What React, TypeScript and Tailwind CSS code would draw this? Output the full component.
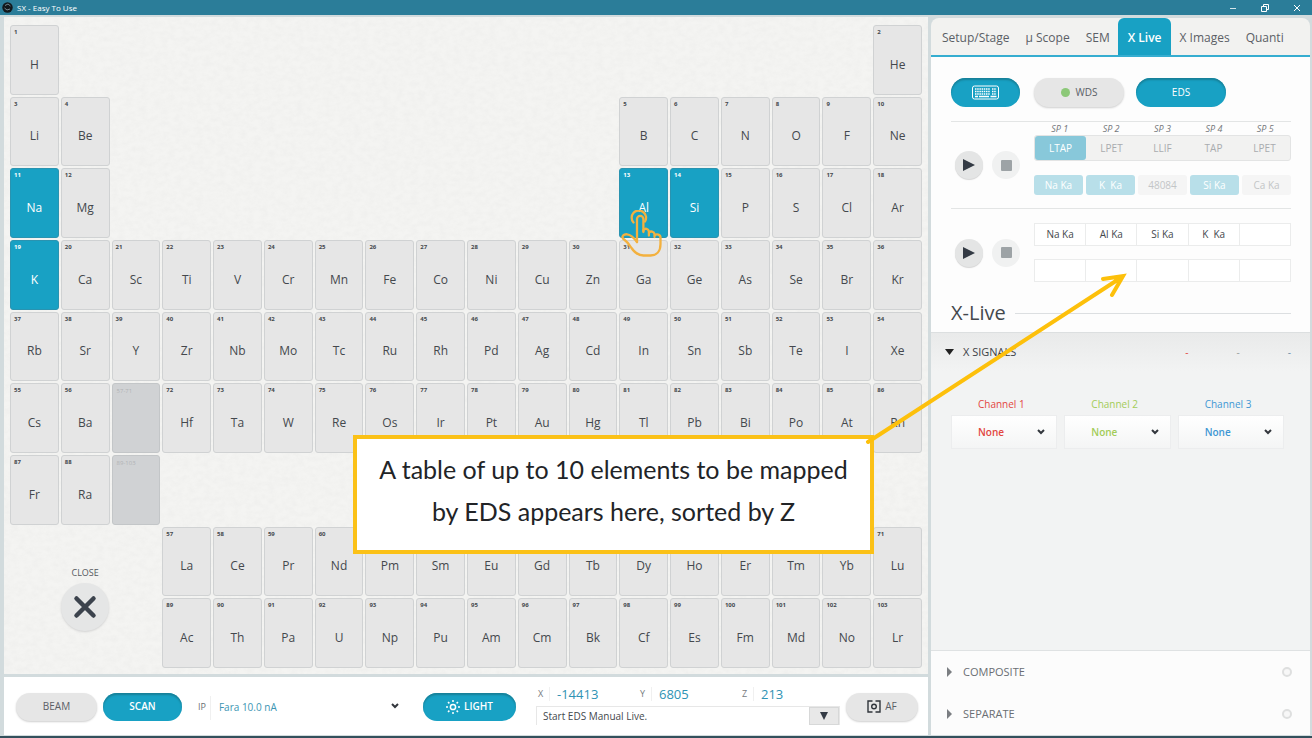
import { useState } from 'react';

const ELEMENTS = (
  'H He Li Be B C N O F Ne Na Mg Al Si P S Cl Ar K Ca Sc Ti V Cr Mn Fe Co Ni Cu Zn Ga Ge As Se Br Kr ' +
  'Rb Sr Y Zr Nb Mo Tc Ru Rh Pd Ag Cd In Sn Sb Te I Xe Cs Ba La Ce Pr Nd Pm Sm Eu Gd Tb Dy Ho Er Tm Yb Lu ' +
  'Hf Ta W Re Os Ir Pt Au Hg Tl Pb Bi Po At Rn Fr Ra Ac Th Pa U Np Pu Am Cm Bk Cf Es Fm Md No Lr'
).split(' ');

// "." is an empty place, "a-b" a block that stands for a series
const ROWS = [
  'H . . . . . . . . . . . . . . . . He',
  'Li Be . . . . . . . . . . B C N O F Ne',
  'Na Mg . . . . . . . . . . Al Si P S Cl Ar',
  'K Ca Sc Ti V Cr Mn Fe Co Ni Cu Zn Ga Ge As Se Br Kr',
  'Rb Sr Y Zr Nb Mo Tc Ru Rh Pd Ag Cd In Sn Sb Te I Xe',
  'Cs Ba 57-71 Hf Ta W Re Os Ir Pt Au Hg Tl Pb Bi Po At Rn',
  'Fr Ra 89-103 . . . . . . . . . . . . . . .',
];
const LANTHANIDES = ELEMENTS.slice(56, 71);
const ACTINIDES = ELEMENTS.slice(88, 103);

const TABS = ['Setup/Stage', 'µ Scope', 'SEM', 'X Live', 'X Images', 'Quanti'];
const SPECTROMETERS = [
  { sp: 'SP 1', crystal: 'LTAP', line: 'Na Ka', on: true },
  { sp: 'SP 2', crystal: 'LPET', line: 'K  Ka', on: true },
  { sp: 'SP 3', crystal: 'LLIF', line: '48084', on: false },
  { sp: 'SP 4', crystal: 'TAP', line: 'Si Ka', on: true },
  { sp: 'SP 5', crystal: 'LPET', line: 'Ca Ka', on: false },
];
const EDS_LINES = ['Na Ka', 'Al Ka', 'Si Ka', 'K  Ka', ''];
const CHANNELS = [
  { name: 'Channel 1', color: 'text-[#e2463f]' },
  { name: 'Channel 2', color: 'text-[#a3cc58]' },
  { name: 'Channel 3', color: 'text-[#3f97d3]' },
];

const PILL_ON = 'bg-[#18a1c4] text-white shadow-[inset_0_2px_2px_#178098]';
const PILL_OFF = 'bg-[#e6e6e6] text-[#5b5f66] shadow-[0_1px_2px_#cfcfcf]';

function Chevron({ className = '' }: { className?: string }) {
  return (
    <svg className={`pointer-events-none ${className}`} width="8" height="6" viewBox="0 0 8 6" fill="none" stroke="#33373d" strokeWidth="2">
      <path d="M1 1l3 3 3-3" />
    </svg>
  );
}

function HandPointer() {
  return (
    <svg className="pointer-events-none absolute top-[42px] left-0.5 z-10" width="44" height="47" viewBox="0 0 44 47" fill="none" stroke="#f3b13f" strokeWidth="2.3" strokeLinecap="round" strokeLinejoin="round">
      <path d="M12.5 12.5a7.2 7.2 0 1 1 11.5-1" />
      <path d="M16 32V9a3.200 3.200 0 0 1 6.400 0v13" />
      <path d="M22.400 21v-1c1.600-2 5-1.500 5.500 1.500v4M27.900 22.500c1.600-1.800 5.200-1 5.600 1.500v3M33.500 25.500c2-2 6-1 6 2V34c0 7.500-4 11.500-10 11.500h-7c-6 0-9-3-12-7.500C8 34 5.500 31 2 28.500c-1.500-2 .5-4.500 4-4.200 3.500.3 7.500 4.200 10 7.700" />
    </svg>
  );
}

function ElementCell({ symbol, selected, onToggle }: { symbol: string; selected: boolean; onToggle: () => void }) {
  return (
    <div className="relative">
      <button
        type="button"
        aria-pressed={selected}
        onClick={onToggle}
        className={`relative flex h-full w-full items-center justify-center rounded-[3px] border pt-[10px] text-[12px] ${
          selected ? 'border-[#2a93b0] bg-[#18a1c4] text-white' : 'border-[#d0d2d3] bg-[#e6e6e6] text-[#44484d]'
        }`}
      >
        <span className="absolute top-0.5 left-[3px] text-[6px] leading-[9px] font-bold">{ELEMENTS.indexOf(symbol) + 1}</span>
        {symbol}
      </button>
      {symbol === 'Al' && <HandPointer />}
    </div>
  );
}

function RoundButtons() {
  return (
    <div className="flex w-[83px] shrink-0 items-center gap-[9px] pl-1">
      <button type="button" aria-label="Play" className="flex size-7 items-center justify-center rounded-full bg-[#e4e5e5] shadow-[0_1px_1px_#d5d5d5]">
        <svg width="14" height="14" viewBox="0 0 14 14" fill="#343b45"><path d="M1 1l12 6-12 6z" /></svg>
      </button>
      <button type="button" aria-label="Stop" className="flex size-7 items-center justify-center rounded-full bg-[#f0f1f1]">
        <span className="size-[11px] rounded-[1px] bg-[#9da3a6]" />
      </button>
    </div>
  );
}

function Coordinate({ axis, value, className = '' }: { axis: string; value: string; className?: string }) {
  return (
    <div className={`flex items-center pl-0.5 ${className}`}>
      <span className="w-3 border-r border-[#f0f0f0] text-[9px] text-[#777b80]">{axis}</span>
      <span className="pl-[7px] text-[13px] leading-4 text-[#2f93b4]">{value}</span>
    </div>
  );
}

function EdsTable({ cells }: { cells: string[] }) {
  return (
    <table className="w-full table-fixed border-collapse">
      <tbody>
        <tr className="h-[22px]">
          {cells.map((line, i) => (
            <td key={i} className="border border-[#ebecec] bg-white p-0 text-center whitespace-pre">{line}</td>
          ))}
        </tr>
      </tbody>
    </table>
  );
}

function FoldedSection({ title }: { title: string }) {
  return (
    <div className="flex h-[42px] items-center px-4">
      <svg width="5" height="10" viewBox="0 0 5 10" fill="#7b7e82"><path d="M0 0l5 5-5 5z" /></svg>
      <button type="button" className="ml-[11px] text-[11px] text-[#6a6e73]">{title}</button>
      <input type="radio" name="view" aria-label={title} className="mr-0.5 ml-auto size-[10px] appearance-none rounded-full border-2 border-[#dedfdf] bg-[#f7f7f7]" />
    </div>
  );
}

export default function App() {
  const [selected, setSelected] = useState(['Na', 'Al', 'Si', 'K']);
  const [tab, setTab] = useState('X Live');

  const toggle = (symbol: string) =>
    setSelected((prev) => (prev.includes(symbol) ? prev.filter((s) => s !== symbol) : [...prev, symbol]));

  const cell = (symbol: string) => (
    <ElementCell key={symbol} symbol={symbol} selected={selected.includes(symbol)} onToggle={() => toggle(symbol)} />
  );

  return (
    <div className="relative flex min-h-screen flex-col overflow-hidden border-b-2 border-[#33505c] bg-[#d2dbdd] font-['Open_Sans','Noto_Sans',sans-serif] text-[#44484d]">
      {/* Title bar */}
      <header className="flex h-[15px] items-center bg-[#2b7d99] pl-[2px] text-white">
        <svg width="11" height="11" viewBox="0 0 11 11">
          <circle cx="5.500" cy="5.500" r="5.200" fill="#12181c" />
          <path d="M3 3.500l3-1.500 2.500 2M2.500 6l2.500 2 3-1" fill="none" stroke="#72868f" />
        </svg>
        <h1 className="ml-1 text-[8px]">SX - Easy To Use</h1>
        <div className="ml-auto flex gap-6 pr-[11px]">
          <button type="button" aria-label="Minimize">
            <svg width="8" height="8" viewBox="0 0 8 8" stroke="#d5e5ea"><path d="M1 4.500h6" /></svg>
          </button>
          <button type="button" aria-label="Restore">
            <svg width="8" height="8" viewBox="0 0 8 8" fill="none" stroke="white"><path d="M.5 2.500h5v5h-5zM2.500 2V.5h5v5H6" /></svg>
          </button>
          <button type="button" aria-label="Close window">
            <svg width="8" height="8" viewBox="0 0 8 8" stroke="white"><path d="M1 1l6 6M7 1L1 7" /></svg>
          </button>
        </div>
      </header>

      <div className="flex grow gap-[3px] pt-0.5 pr-0.5 pl-1">
        <main className="flex grow flex-col gap-[3px] pb-px">
          {/* Periodic table */}
          <section className="relative grid grow grid-cols-18 grid-rows-9 gap-0.5 bg-[#f4f4f2] px-1.5 pt-2 pb-1.5">
            <svg className="absolute inset-0 h-full w-full opacity-10" aria-hidden="true">
              <filter id="paper">
                <feTurbulence type="fractalNoise" baseFrequency="0.14 0.2" numOctaves="3" seed="4" />
                <feColorMatrix type="matrix" values="0 0 0 0 .5  0 0 0 0 .5  0 0 0 0 .5  1.300 0 0 0 -.4" />
              </filter>
              <rect width="100%" height="100%" filter="url(#paper)" />
            </svg>
            {ROWS.map((row, r) =>
              row.split(' ').map((item, c) => {
                if (item === '.') return <div key={`${r}-${c}`} />;
                if (item.includes('-')) {
                  return (
                    <div key={item} className="relative rounded-[3px] border border-[#c3c6c8] bg-[#d0d2d4] px-1 text-[6px] leading-[14px] text-[#b0b3b5]">
                      {item}
                    </div>
                  );
                }
                return cell(item);
              }),
            )}
            <div className="relative col-span-3 row-span-2 flex flex-col items-center justify-center gap-1 pt-1">
              <span className="text-[9px] leading-3 text-[#55595e]">CLOSE</span>
              <button type="button" aria-label="Close" className="flex size-12 items-center justify-center rounded-full bg-[#e5e6e6] shadow-[0_1px_2px_#d3d3d3]">
                <svg width="24" height="24" viewBox="0 0 24 24" stroke="#3c434d" strokeWidth="4.500" strokeLinecap="round"><path d="M3.500 3.500l17 17M20.500 3.500l-17 17" /></svg>
              </button>
            </div>
            {LANTHANIDES.map(cell)}
            {ACTINIDES.map(cell)}
          </section>

          {/* Instrument bar */}
          <footer className="flex h-[58px] shrink-0 items-center bg-white pt-px pr-[10px] pl-3">
            <button type="button" className={`h-7 w-[81px] rounded-full text-[10px] ${PILL_OFF}`}>BEAM</button>
            <button type="button" className={`ml-1.5 h-7 w-[79px] rounded-full text-[10px] font-semibold ${PILL_ON}`}>SCAN</button>
            <label htmlFor="probe" className="ml-4 text-[9px] text-[#6b6f75]">IP</label>
            <div className="relative ml-1 min-w-0 grow">
              <select id="probe" className="h-6 w-full appearance-none border-l border-[#f0f0f0] bg-white pl-2 text-[10px] text-[#3c95b3]">
                <option>Fara 10.0 nA</option>
              </select>
              <Chevron className="absolute top-[10px] right-0.5" />
            </div>
            <button type="button" className={`ml-[22px] flex h-7 w-[93px] items-center justify-center gap-1 rounded-full text-[10px] font-semibold ${PILL_ON}`}>
              <svg width="14" height="14" viewBox="0 0 14 14" fill="none" stroke="white" strokeWidth="1.500">
                <circle cx="7" cy="7" r="2.600" />
                <path d="M7 0v2M7 12v2M0 7h2M12 7h2M2 2l1.400 1.400M10.600 10.600L12 12M12 2l-1.400 1.400M3.400 10.600L2 12" />
              </svg>
              LIGHT
            </button>
            <div className="ml-5 w-[304px] pb-0.5">
              <div className="flex h-5 items-start">
                <Coordinate axis="X" value="-14413" className="w-[102px]" />
                <Coordinate axis="Y" value="6805" className="w-[102px]" />
                <Coordinate axis="Z" value="213" />
              </div>
              <div className="flex h-[19px] border border-b-0 border-[#e7e7e7]">
                <input aria-label="Status" readOnly value="Start EDS Manual Live." className="min-w-0 grow bg-white px-1.5 text-[10px] text-[#44484d]" />
                <button type="button" aria-label="Show messages" className="flex w-[30px] items-center justify-center border border-[#d7d8d8] bg-[#e8e8e8]">
                  <svg width="8" height="8" viewBox="0 0 8 8" fill="#343b45"><path d="M0 0h8L4 8z" /></svg>
                </button>
              </div>
            </div>
            <button type="button" className={`ml-1.5 flex h-7 w-[72px] items-center justify-center gap-1 rounded-full text-[10px] ${PILL_OFF}`}>
              <svg width="14" height="13" viewBox="0 0 14 13" fill="none" stroke="#30353b" strokeWidth="1.400">
                <path d="M5.500 1H1v11h4.500M8.500 1H13v11H8.500" />
                <circle cx="7" cy="6.500" r="2.300" />
              </svg>
              AF
            </button>
          </footer>
        </main>

        {/* Acquisition panel */}
        <aside className="flex w-[379px] shrink-0 flex-col pt-px pb-px">
          <nav className="flex h-[39px] rounded-t-lg border-b-2 border-[#35add0] bg-[#f2f2f0] pl-[3px]">
            {TABS.map((name) => (
              <button
                key={name}
                type="button"
                onClick={() => setTab(name)}
                className={`pt-0.5 text-[12px] whitespace-nowrap ${
                  tab === name ? 'rounded-t-md bg-[#18a1c4] px-[10px] font-semibold text-white' : 'px-2 text-[#5b5f66]'
                }`}
              >
                {name}
              </button>
            ))}
          </nav>

          <section className="bg-[#fdfdfd] pt-[21px] pr-[19px] pl-5 text-[10px]">
            <div className="flex h-[29px]">
              <button type="button" aria-label="Keyboard" className={`flex w-[69px] items-center justify-center rounded-full ${PILL_ON}`}>
                <svg width="27" height="15" viewBox="0 0 27 15" fill="none" stroke="white">
                  <rect x=".5" y="1" width="26" height="13" rx="2" />
                  <path d="M3 4h15M3 6.500h15M3 9h15M20 4h4.500M20 6.500h4.500M20 9h4.500" strokeWidth="1.500" strokeDasharray="1.500 .7" />
                  <path d="M3 11.500h3M7 11.500h10M18.500 11.500h6" strokeWidth="1.300" />
                </svg>
              </button>
              <button type="button" className={`ml-3.5 flex w-[90px] items-center justify-center gap-1.5 rounded-full ${PILL_OFF}`}>
                <span className="size-[9px] rounded-full bg-[#8cc878]" />
                WDS
              </button>
              <button type="button" className={`ml-3 w-[90px] rounded-full ${PILL_ON}`}>EDS</button>
            </div>

            {/* WDS spectrometers */}
            <div className="mt-3.5 flex h-[88px] border-y border-[#e3e5e5]">
              <RoundButtons />
              <div className="grow pt-px">
                <div className="grid h-3 grid-cols-5 text-center text-[9px] leading-3 text-[#74777b] italic">
                  {SPECTROMETERS.map(({ sp }) => <span key={sp}>{sp}</span>)}
                </div>
                <div className="grid h-[26px] grid-cols-5 rounded-[3px] border border-[#e3e4e4] bg-[#f2f2f1]">
                  {SPECTROMETERS.map(({ sp, crystal }, i) => (
                    <button key={sp} type="button" className={i === 0 ? 'rounded-[3px] bg-[#88c8da] text-white' : 'text-[#a9acaf]'}>
                      {crystal}
                    </button>
                  ))}
                </div>
                <div className="mt-3.5 grid h-5 grid-cols-5 gap-[3px]">
                  {SPECTROMETERS.map(({ sp, line, on }) => (
                    <button key={sp} type="button" className={`rounded-[3px] whitespace-pre ${on ? 'bg-[#b8dfe9] text-white' : 'bg-[#f5f5f5] text-[#c3c5c7]'}`}>
                      {line}
                    </button>
                  ))}
                </div>
              </div>
            </div>

            {/* EDS elements */}
            <div className="mt-3.5 flex">
              <RoundButtons />
              <div className="flex grow flex-col gap-[13px]">
                <EdsTable cells={EDS_LINES} />
                <EdsTable cells={['', '', '', '', '']} />
              </div>
            </div>

            <div className="mt-3 flex h-[38px] items-center gap-[9px]">
              <h2 className="text-[20px] leading-6">X-Live</h2>
              <hr className="grow border-[#dcdfe1]" />
            </div>
          </section>

          {/* Signals */}
          <section className="grow border-t border-[#dcdfe0] bg-[#f2f3f3]">
            <div className="flex h-[38px] items-center bg-linear-to-b from-[#e9eaea] to-[#f2f3f3] pr-[19px] pl-3.5">
              <svg width="9" height="6" viewBox="0 0 9 6" fill="#222"><path d="M0 0h9L4.500 6z" /></svg>
              <button type="button" className="ml-[9px] text-[11px] text-[#3d4146]">X SIGNALS</button>
              <div className="ml-auto flex gap-12 text-[10px]">
                <span className="text-[#e2463f]">-</span>
                <span className="text-[#9aa0a0]">-</span>
                <span className="text-[#6d90a8]">-</span>
              </div>
            </div>
            <div className="mt-[26px] flex gap-[7px] pr-[26px] pl-5 text-[10px]">
              {CHANNELS.map(({ name, color }) => (
                <label key={name} className={`relative grow ${color}`}>
                  <span className="block pl-[27px] leading-[14px]">{name}</span>
                  <select className="mt-1 h-[34px] w-full appearance-none border border-[#ecedee] bg-linear-to-b from-white to-[#f4f5f5] pl-[26px] font-semibold">
                    <option>None</option>
                  </select>
                  <Chevron className="absolute right-3 bottom-3.5" />
                </label>
              ))}
            </div>
          </section>
          <section className="border-t border-[#dfe2e3] bg-[#fcfcfc]">
            <FoldedSection title="COMPOSITE" />
            <FoldedSection title="SEPARATE" />
          </section>
        </aside>
      </div>

      {/* Callout */}
      <div className="absolute top-[435px] left-[353px] z-20 h-[119px] w-[521px] border-4 border-[#fbc117] bg-white pt-[9px] text-center font-['Lato','Open_Sans',sans-serif] text-[25px] leading-[42px] text-[#222427]">
        A table of up to 10 elements to be mapped
        <br />
        by EDS appears here, sorted by Z
      </div>
      <svg className="pointer-events-none absolute top-[270px] left-[860px] z-20" width="272" height="180" viewBox="0 0 272 180" fill="none" stroke="#fdc00b" strokeWidth="4" strokeLinecap="round">
        <path d="M8 172L262 7M243 9l20-3-11 19" />
      </svg>
    </div>
  );
}
